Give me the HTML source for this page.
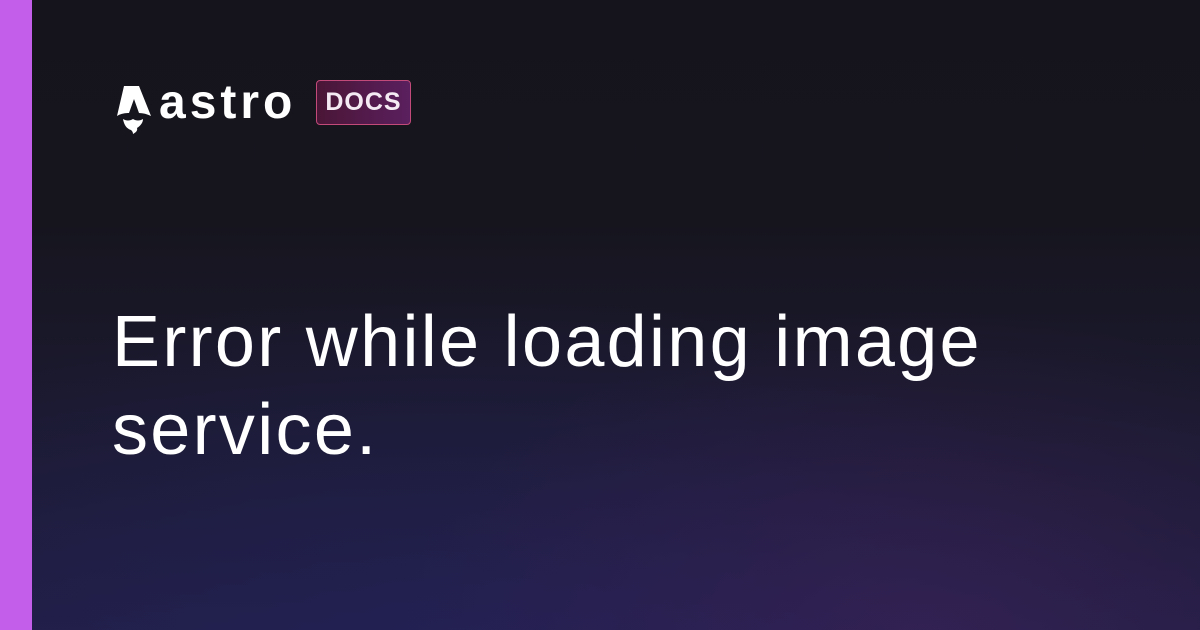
<!DOCTYPE html>
<html><head><meta charset="utf-8"><style>
html,body{margin:0;padding:0}
body{width:1200px;height:630px;overflow:hidden;position:relative;background:#16151d;font-family:"Liberation Sans",sans-serif}
.bg{position:absolute;inset:0;background:
radial-gradient(ellipse 520px 330px at 920px 640px,rgba(70,35,95,.45),transparent),
radial-gradient(ellipse 700px 360px at 450px 650px,rgba(35,35,95,.55),transparent),
linear-gradient(180deg,#15141c 0%,#16151e 35%,#1d1b35 75%,#211e44 100%)}
.stripe{position:absolute;left:0;top:0;width:32px;height:630px;background:#c25ee9}
.logo{position:absolute;left:112px;top:84px}
.word{position:absolute;left:159px;top:75px;color:#fff;font-weight:bold;font-size:48px;letter-spacing:4px}
.badge{position:absolute;left:316px;top:80px;width:95px;height:45px;box-sizing:border-box;border:1.5px solid #c14a7a;border-radius:4px;background:linear-gradient(90deg,#4a1636,#5a1f5e);color:#f3eaf3;font-size:25px;font-weight:bold;text-align:center;line-height:43px;letter-spacing:1px}
h1{position:absolute;left:112px;top:298px;margin:0;color:#fff;font-weight:normal;font-size:72px;line-height:88px;letter-spacing:2.3px}
</style></head><body>
<div class="bg"></div>
<div class="stripe"></div>
<svg class="logo" width="40" height="50" viewBox="0 0 40 50"><path d="M12 2h15l12 30c-4-2-8-3-12-3l-5-14-5 14c-5 0-9 1-12 3z" fill="#fff"/><path d="M11 35c3 2 7 2 10 0 3 2 7 2 10 0 0 4-3 7-6 9 1 3-2 5-4 6 0-2-1-3-2-4-4-1-7-5-8-11z" fill="#fff"/></svg>
<div class="word">astro</div>
<div class="badge">DOCS</div>
<h1>Error while loading image<br>service.</h1>
</body></html>
